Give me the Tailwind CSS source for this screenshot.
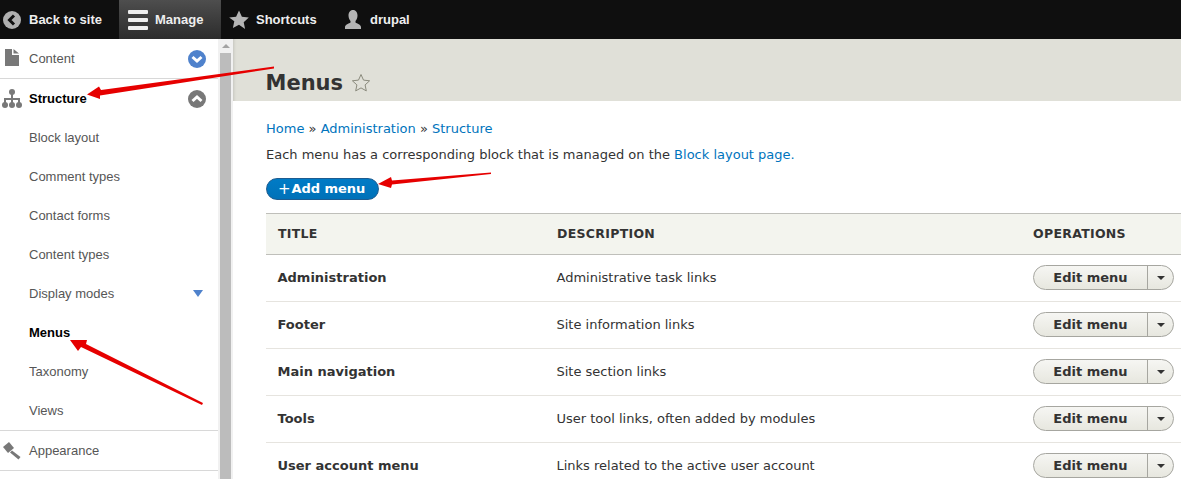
<!DOCTYPE html>
<html><head><meta charset="utf-8"><script src="https://cdn.jsdelivr.net/npm/@tailwindcss/browser@4"></script></head>
<body class="m-0 overflow-hidden bg-white">
<div class="relative w-[1181px] h-[479px] overflow-hidden font-['DejaVu_Sans',sans-serif] text-[13px] text-[#333]">
  <header class="h-[39px] bg-[#0f0f0f] flex items-center font-['Liberation_Sans',sans-serif] font-bold text-[13px] text-[#eee]">
    <a class="flex items-center h-full w-[119px] pl-[3px] gap-[8px]">
      <svg class="w-[18px] h-[18px]" viewBox="0 0 18 18"><circle cx="9" cy="9" r="9" fill="#b0b0b0"/><path d="M11 4.500 6.500 9l4.500 4.500" fill="none" stroke="#111" stroke-width="3"/></svg>
      <span>Back to site</span></a>
    <a class="flex items-center h-full w-[102px] pl-[9px] gap-[7px] bg-gradient-to-b from-[#4e4e4e] to-[#2c2c2c]">
      <svg class="w-[20px] h-[20px]" viewBox="0 0 20 20"><rect y="0" width="20" height="4" rx="1" fill="#eee"/><rect y="8" width="20" height="4" rx="1" fill="#eee"/><rect y="16" width="20" height="4" rx="1" fill="#eee"/></svg>
      <span>Manage</span></a>
    <a class="flex items-center h-full w-[122px] pl-[8px] gap-[7px]">
      <svg class="w-[20px] h-[20px]" viewBox="0 0 20 20"><path d="M10 .5l2.900 6.300 6.900.8-5.100 4.700 1.400 6.800L10 14.700l-6.100 3.400 1.400-6.800L.2 7.600l6.900-.8z" fill="#b5b5b5"/></svg>
      <span>Shortcuts</span></a>
    <a class="flex items-center h-full gap-[7px]">
      <svg class="w-[20px] h-[20px]" viewBox="0 0 20 20"><path d="M10 0c3 0 4.500 2.500 4.500 5.500 0 2.500-1 4.500-2 5.500v1.500c1.500 1 5.500 2 5.500 4.500V19H2v-2c0-2.500 4-3.500 5.500-4.500V11c-1-1-2-3-2-5.500C5.500 2.500 7 0 10 0z" fill="#b5b5b5"/></svg>
      <span>drupal</span></a>
  </header>

  <div class="flex h-[440px]">
    <nav class="w-[218px] shrink-0 font-['Liberation_Sans',sans-serif] text-[13px] text-[#565656]">
      <div class="h-[40px] border-b border-[#d8d8d8] flex items-center pl-[29px] pr-[12px] relative">
        <svg class="absolute left-[5px] top-[10px] w-[14px] h-[17px]" viewBox="0 0 14 17"><path d="M0 0h7v6h7v11H0zM8.500 0 14 4.500H8.500z" fill="#787878"/></svg>
        <span class="flex-1">Content</span>
        <svg class="w-[18px] h-[18px]" viewBox="0 0 18 18"><circle cx="9" cy="9" r="9" fill="#4f82cc"/><path d="M4.500 7 9 11l4.500-4" fill="none" stroke="#fff" stroke-width="3"/></svg>
      </div>
      <div class="h-[39px] flex items-center pl-[29px] pr-[12px] relative font-bold text-black">
        <svg class="absolute left-[2px] top-[10px] w-[20px] h-[19px]" viewBox="0 0 20 19"><circle cx="10" cy="3" r="3" fill="#787878"/><path d="M9 5h2v4h7v6h-2v-4h-5v4H9v-4H4v4H2V9h7z" fill="#787878"/><circle cx="3" cy="16" r="3" fill="#787878"/><circle cx="10" cy="16" r="3" fill="#787878"/><circle cx="17" cy="16" r="3" fill="#787878"/></svg>
        <span class="flex-1">Structure</span>
        <svg class="w-[18px] h-[18px]" viewBox="0 0 18 18"><circle cx="9" cy="9" r="9" fill="#787878"/><path d="M4.500 11 9 7l4.500 4" fill="none" stroke="#fff" stroke-width="3"/></svg>
      </div>
      <div class="h-[39px] flex items-center pl-[29px]">Block layout</div>
      <div class="h-[39px] flex items-center pl-[29px]">Comment types</div>
      <div class="h-[39px] flex items-center pl-[29px]">Contact forms</div>
      <div class="h-[39px] flex items-center pl-[29px]">Content types</div>
      <div class="h-[39px] flex items-center pl-[29px] pr-[15px]"><span class="flex-1">Display modes</span>
        <span class="w-0 h-0 border-x-[5.500px] border-x-transparent border-t-[7px] border-t-[#4f82cc]"></span></div>
      <div class="h-[39px] flex items-center pl-[29px] font-bold text-black">Menus</div>
      <div class="h-[39px] flex items-center pl-[29px]">Taxonomy</div>
      <div class="h-[40px] border-b border-[#d8d8d8] flex items-center pl-[29px]">Views</div>
      <div class="h-[40px] border-b border-[#d8d8d8] flex items-center pl-[29px] relative">
        <svg class="absolute left-[2px] top-[10px] w-[19px] h-[19px]" viewBox="0 0 19 19"><path d="M1 6 7 1l5 6-6 5z" fill="#787878"/><path d="M10 9.500 18.500 16 16.500 18.500 8 11.500z" fill="#787878"/></svg>
        <span>Appearance</span></div>
    </nav>

    <div class="w-[15px] shrink-0 bg-[#f1f1f1] flex flex-col items-center relative">
      <span class="mt-[5px] w-0 h-0 border-x-[4px] border-x-transparent border-b-[4px] border-b-[#a3a3a3]"></span>
      <div class="mt-[5px] w-[11px] flex-1 bg-[#bcbcbc]"></div>
    </div>

    <main class="flex-1 min-w-0 relative">
      <div class="h-[62px] bg-[#e0e0d8] pl-[33px] pt-[26px] flex items-center gap-[8px] shadow-[inset_4px_0_3px_-3px_rgba(0,0,0,0.12)]">
        <h1 class="text-[21px] font-bold leading-[36px] text-[#333] ml-[-0.5px]">Menus</h1>
        <svg class="w-[20px] h-[20px]" viewBox="0 0 20 20"><path d="M10 1.500l2.500 5.600 6.100.7-4.500 4.100 1.200 6L10 14.900l-5.300 3 1.200-6L1.400 7.800l6.100-.7z" fill="none" stroke="#8a8a7c" stroke-width="1"/></svg>
      </div>
      <div class="pl-[33px]">
        <div class="mt-[20px] h-[16px] leading-[16px] text-[#0074bd]">Home <span class="text-[#333]">»</span> Administration <span class="text-[#333]">»</span> Structure</div>
        <p class="mt-[10px] h-[16px] leading-[16px] whitespace-nowrap">Each menu has a corresponding block that is managed on the <span class="text-[#0074bd]">Block layout page.</span></p>
        <div class="mt-[15px] w-[113px] h-[22px] rounded-[11px] bg-gradient-to-b from-[#007bc6] to-[#0071b8] border border-[#1e5c90] flex items-center pl-[11px] font-bold text-white text-[13px]"><span class="text-[15px] leading-none mr-[1px] font-normal">+</span><span class="tracking-[-0.05px]">Add menu</span></div>
        <div class="mt-[13px] w-[915px]">
          <div class="h-[42px] bg-[#f3f4ee] border-y border-[#bfbfba] flex items-center font-bold text-[12.500px] tracking-[0.3px] text-[#333]">
            <span class="w-[291px] pl-[12px]">TITLE</span><span class="w-[476px]">DESCRIPTION</span><span>OPERATIONS</span>
          </div>
          <div class="h-[47px] border-b border-[#e6e4df] flex items-center"><span class="w-[290.500px] pl-[11.500px] font-bold">Administration</span><span class="w-[476.500px]">Administrative task links</span>
            <span class="flex w-[141px] h-[25px] mt-[-1px] rounded-[13px] border border-[#a6a6a0] bg-gradient-to-b from-[#f6f6f3] to-[#e7e7df] font-bold text-[#333] overflow-hidden"><span class="w-[114px] flex items-center justify-center border-r border-[#a6a6a0]">Edit menu</span><span class="flex-1 flex items-center justify-center"><i class="w-0 h-0 border-x-[4px] border-x-transparent border-t-[4px] border-t-[#333]"></i></span></span></div>
          <div class="h-[47px] border-b border-[#e6e4df] flex items-center"><span class="w-[290.500px] pl-[11.500px] font-bold">Footer</span><span class="w-[476.500px]">Site information links</span>
            <span class="flex w-[141px] h-[25px] mt-[-1px] rounded-[13px] border border-[#a6a6a0] bg-gradient-to-b from-[#f6f6f3] to-[#e7e7df] font-bold text-[#333] overflow-hidden"><span class="w-[114px] flex items-center justify-center border-r border-[#a6a6a0]">Edit menu</span><span class="flex-1 flex items-center justify-center"><i class="w-0 h-0 border-x-[4px] border-x-transparent border-t-[4px] border-t-[#333]"></i></span></span></div>
          <div class="h-[47px] border-b border-[#e6e4df] flex items-center"><span class="w-[290.500px] pl-[11.500px] font-bold">Main navigation</span><span class="w-[476.500px]">Site section links</span>
            <span class="flex w-[141px] h-[25px] mt-[-1px] rounded-[13px] border border-[#a6a6a0] bg-gradient-to-b from-[#f6f6f3] to-[#e7e7df] font-bold text-[#333] overflow-hidden"><span class="w-[114px] flex items-center justify-center border-r border-[#a6a6a0]">Edit menu</span><span class="flex-1 flex items-center justify-center"><i class="w-0 h-0 border-x-[4px] border-x-transparent border-t-[4px] border-t-[#333]"></i></span></span></div>
          <div class="h-[47px] border-b border-[#e6e4df] flex items-center"><span class="w-[290.500px] pl-[11.500px] font-bold">Tools</span><span class="w-[476.500px]">User tool links, often added by modules</span>
            <span class="flex w-[141px] h-[25px] mt-[-1px] rounded-[13px] border border-[#a6a6a0] bg-gradient-to-b from-[#f6f6f3] to-[#e7e7df] font-bold text-[#333] overflow-hidden"><span class="w-[114px] flex items-center justify-center border-r border-[#a6a6a0]">Edit menu</span><span class="flex-1 flex items-center justify-center"><i class="w-0 h-0 border-x-[4px] border-x-transparent border-t-[4px] border-t-[#333]"></i></span></span></div>
          <div class="h-[47px] border-b border-[#e6e4df] flex items-center"><span class="w-[290.500px] pl-[11.500px] font-bold">User account menu</span><span class="w-[476.500px]">Links related to the active user account</span>
            <span class="flex w-[141px] h-[25px] mt-[-1px] rounded-[13px] border border-[#a6a6a0] bg-gradient-to-b from-[#f6f6f3] to-[#e7e7df] font-bold text-[#333] overflow-hidden"><span class="w-[114px] flex items-center justify-center border-r border-[#a6a6a0]">Edit menu</span><span class="flex-1 flex items-center justify-center"><i class="w-0 h-0 border-x-[4px] border-x-transparent border-t-[4px] border-t-[#333]"></i></span></span></div>
        </div>
      </div>
    </main>
  </div>

  <svg class="absolute inset-0 pointer-events-none" width="1181" height="479" viewBox="0 0 1181 479">
    <g fill="#e60000">
      <path d="M274 66.500 L101 90 L99 86.500 L87 94.500 L100 99 L100 95.500 L274 68.500 Z"/>
      <path d="M491 172.500 L392 180.500 L391 177 L378 184 L391 188 L392 184.500 L491 174 Z"/>
      <path d="M203 403 L86 344 L87 340 L70 340 L78 351 L81 347 L202 405 Z"/>
    </g>
  </svg>
</div>
</body></html>
